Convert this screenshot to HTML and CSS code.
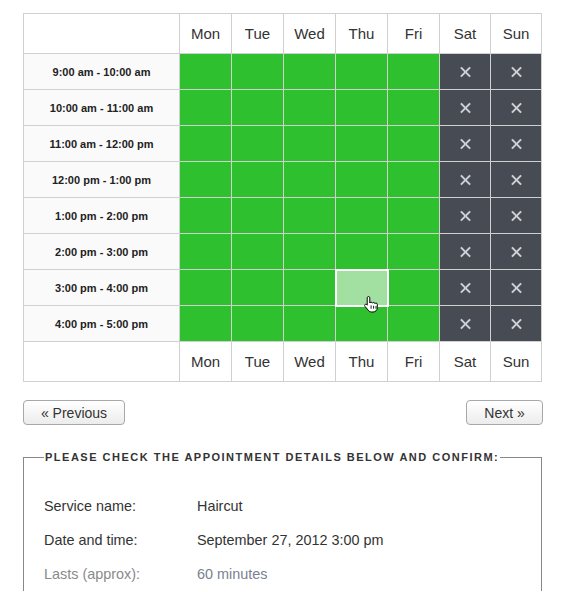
FILE: index.html
```html
<!DOCTYPE html>
<html>
<head>
<meta charset="utf-8">
<link rel="stylesheet" href="styles.css">
</head>
<body>
<div class="page">
  <div class="grid-wrap">
    <table class="schedule">
      <thead>
        <tr>
          <th class="corner"></th>
          <th>Mon</th><th>Tue</th><th>Wed</th><th>Thu</th><th>Fri</th><th class="we">Sat</th><th class="we">Sun</th>
        </tr>
      </thead>
      <tbody>
        <tr><td class="time">9:00 am - 10:00 am</td><td class="free"></td><td class="free"></td><td class="free"></td><td class="free"></td><td class="free"></td><td class="off"><i class="x"></i></td><td class="off"><i class="x"></i></td></tr>
        <tr><td class="time">10:00 am - 11:00 am</td><td class="free"></td><td class="free"></td><td class="free"></td><td class="free"></td><td class="free"></td><td class="off"><i class="x"></i></td><td class="off"><i class="x"></i></td></tr>
        <tr><td class="time">11:00 am - 12:00 pm</td><td class="free"></td><td class="free"></td><td class="free"></td><td class="free"></td><td class="free"></td><td class="off"><i class="x"></i></td><td class="off"><i class="x"></i></td></tr>
        <tr><td class="time">12:00 pm - 1:00 pm</td><td class="free"></td><td class="free"></td><td class="free"></td><td class="free"></td><td class="free"></td><td class="off"><i class="x"></i></td><td class="off"><i class="x"></i></td></tr>
        <tr><td class="time">1:00 pm - 2:00 pm</td><td class="free"></td><td class="free"></td><td class="free"></td><td class="free"></td><td class="free"></td><td class="off"><i class="x"></i></td><td class="off"><i class="x"></i></td></tr>
        <tr><td class="time">2:00 pm - 3:00 pm</td><td class="free"></td><td class="free"></td><td class="free"></td><td class="free"></td><td class="free"></td><td class="off"><i class="x"></i></td><td class="off"><i class="x"></i></td></tr>
        <tr><td class="time">3:00 pm - 4:00 pm</td><td class="free"></td><td class="free"></td><td class="free"></td><td class="free hover"><span class="cursor"><svg width="16" height="18" viewBox="0 0 16 18"><path d="M5.5 1.5c.8 0 1.3.6 1.3 1.3v5.2c.2-.6.7-.9 1.3-.9.7 0 1.2.5 1.3 1.1.2-.5.7-.8 1.2-.8.7 0 1.2.5 1.3 1.2.2-.4.6-.6 1.1-.6.7 0 1.3.6 1.3 1.3v3.4c0 2.5-1.8 4.3-4.3 4.3H8.6c-1.4 0-2.4-.6-3.3-1.7L1.9 11.3c-.5-.6-.4-1.4.2-1.8.6-.4 1.3-.3 1.8.3l.3.4V2.8c0-.7.6-1.3 1.3-1.3z" fill="#fff" stroke="#000" stroke-width="1"/><path d="M8.1 10.5v3.2M10.6 10.8v2.9M13 11v2.7" stroke="#000" stroke-width="0.9"/></svg></span></td><td class="free"></td><td class="off"><i class="x"></i></td><td class="off"><i class="x"></i></td></tr>
        <tr><td class="time">4:00 pm - 5:00 pm</td><td class="free"></td><td class="free"></td><td class="free"></td><td class="free"></td><td class="free"></td><td class="off"><i class="x"></i></td><td class="off"><i class="x"></i></td></tr>
      </tbody>
      <tfoot>
        <tr>
          <th class="corner"></th>
          <th>Mon</th><th>Tue</th><th>Wed</th><th>Thu</th><th>Fri</th><th class="we">Sat</th><th class="we">Sun</th>
        </tr>
      </tfoot>
    </table>
  </div>

  <div class="nav">
    <button class="btn prev">« Previous</button>
    <button class="btn next">Next »</button>
  </div>

  <fieldset class="details">
    <legend>Please check the appointment details below and confirm:</legend>
    <div class="row"><span class="label">Service name:</span><span class="value">Haircut</span></div>
    <div class="row"><span class="label">Date and time:</span><span class="value">September 27, 2012 3:00 pm</span></div>
    <div class="row faded"><span class="label">Lasts (approx):</span><span class="value">60 minutes</span></div>
  </fieldset>
</div>
</body>
</html>
```

FILE: styles.css
```css
html, body {
  margin: 0;
  padding: 0;
  background: #fff;
  font-family: "Liberation Sans", Arial, sans-serif;
  color: #333;
}

.page {
  padding: 13px 0 0 23px;
  width: 519px;
}

.schedule {
  border-collapse: collapse;
  table-layout: fixed;
  width: 519px;
}

.schedule th,
.schedule td {
  border: 1px solid #d0d0d0;
  padding: 0;
  text-align: center;
  vertical-align: middle;
}

.schedule th {
  height: 39px;
  font-weight: normal;
  font-size: 15px;
  color: #333;
  width: 51px;
  background: #fff;
}

.schedule th.corner {
  width: 155px;
}

.schedule th.we {
  width: 50px;
}

.schedule td {
  height: 35px;
}

.schedule td.time {
  background: #fafafa;
  font-size: 11px;
  font-weight: bold;
  color: #222;
}

.schedule td.free {
  background: #2ec02e;
}

.schedule td.hover {
  background: #a2e0a2;
  outline: 2px solid #fff;
  outline-offset: -1px;
  position: relative;
}

.cursor {
  position: absolute;
  left: 27px;
  top: 25px;
  width: 16px;
  height: 18px;
  line-height: 0;
}

.schedule td.off {
  background: #464b54;
  line-height: 0;
}

.x {
  display: inline-block;
  position: relative;
  width: 11px;
  height: 11px;
}

.x::before,
.x::after {
  content: "";
  position: absolute;
  left: -1px;
  top: 4.5px;
  width: 13px;
  height: 2px;
  background: #cfd1d4;
  transform: rotate(45deg);
}

.x::after {
  transform: rotate(-45deg);
}

.nav {
  display: flex;
  justify-content: space-between;
  margin-top: 18px;
  width: 520px;
}

.btn {
  height: 25px;
  border: 1px solid #a8a8a8;
  border-radius: 4px;
  background: linear-gradient(#ffffff, #ececec);
  font-family: "Liberation Sans", Arial, sans-serif;
  font-size: 14px;
  color: #333;
  padding: 0;
}

.btn.prev {
  width: 102px;
}

.btn.next {
  width: 77px;
}

.details {
  margin: 26px 0 0 0;
  padding: 26px 20px 0 20px;
  border: 1px solid #888;
  border-bottom: none;
  width: 477px;
  min-width: 0;
}

.details legend {
  padding: 0 1px;
  font-size: 11px;
  font-weight: bold;
  text-transform: uppercase;
  letter-spacing: 1.5px;
  color: #333;
}

.row {
  display: flex;
  height: 34px;
  align-items: center;
  font-size: 14.4px;
  color: #333;
}

.row .label {
  width: 153px;
}

.row.faded .label {
  color: #8a8a8a;
}

.row.faded .value {
  color: #7a8190;
}
```
